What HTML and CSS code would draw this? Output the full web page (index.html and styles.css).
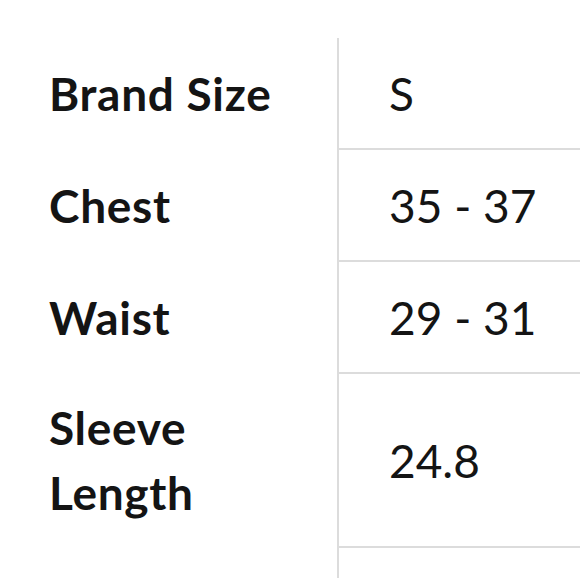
FILE: index.html
```html
<!DOCTYPE html>
<html>
<head>
<meta charset="utf-8">
<link rel="stylesheet" href="styles.css">
</head>
<body>
<div class="sheet">
  <div class="label">Brand Size</div><div class="value">S</div>
  <div class="label">Chest</div><div class="value">35 - 37</div>
  <div class="label">Waist</div><div class="value">29 - 31</div>
  <div class="label tall">Sleeve<br>Length</div><div class="value tall">24.8</div>
  <div class="label end"></div><div class="value end"></div>
</div>
</body>
</html>
```
FILE: styles.css
```css
html, body {
  margin: 0;
  padding: 0;
  background: #fff;
}
body {
  font-family: Lato, "Liberation Sans", sans-serif;
  color: #141414;
  overflow: hidden;
}
.sheet {
  display: grid;
  grid-template-columns: 337px 1fr;
  margin-top: 38px;
}
.label, .value {
  display: flex;
  align-items: center;
  height: 110px;
  font-size: 46px;
  line-height: 65px;
}
.label {
  font-weight: 700;
  padding-left: 49px;
  letter-spacing: 0.7px;
}
.value {
  font-weight: 400;
  padding-left: 50px;
  border-left: 2px solid #dcdcdc;
  border-bottom: 2px solid #dcdcdc;
}
.tall {
  height: 172px;
}
.end {
  height: 30px;
}
.value.end {
  border-bottom: none;
}
```
